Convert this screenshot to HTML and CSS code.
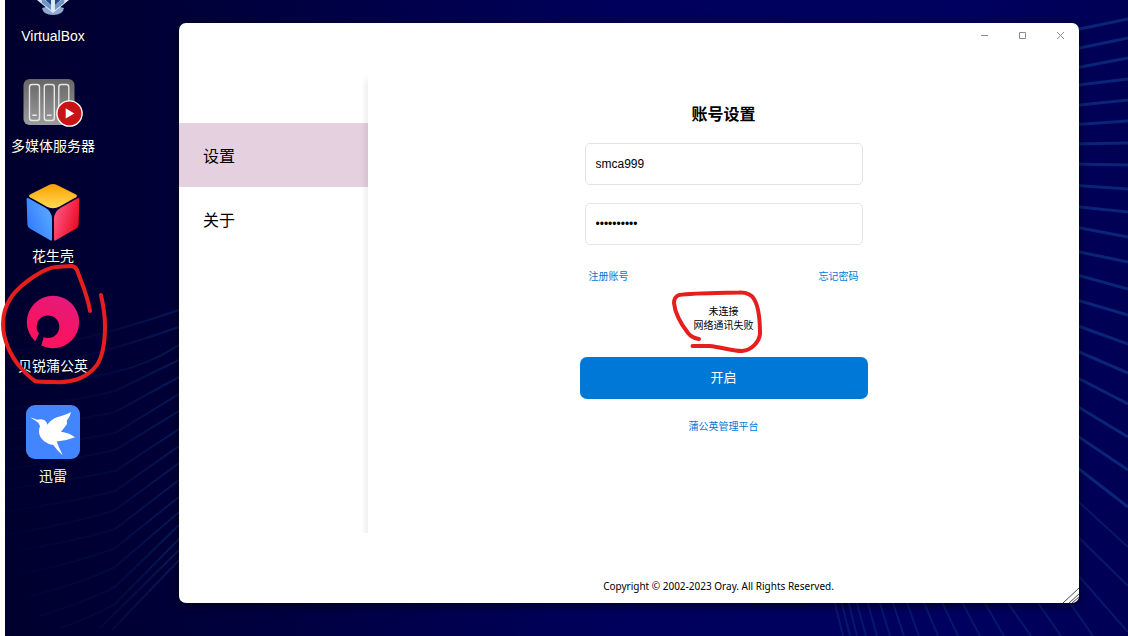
FILE: index.html
```
<!DOCTYPE html>
<html lang="zh-CN">
<head>
  <meta charset="UTF-8">
  <meta name="viewport" content="width=device-width, initial-scale=1.0">
  <title>贝锐蒲公英</title>
  <link rel="stylesheet" href="styles.css">
</head>
<body>
  <div class="desktop">
    <!-- Wallpaper waves -->
    <svg class="wallpaper" viewBox="5 0 1123 636" preserveAspectRatio="none" aria-hidden="true">
      <defs>
        <linearGradient id="waveFade" gradientUnits="userSpaceOnUse" x1="5" y1="0" x2="179" y2="0">
          <stop offset="0" stop-color="#04104a" stop-opacity="0.1"/>
          <stop offset="0.6" stop-color="#04104a" stop-opacity="0.5"/>
          <stop offset="1" stop-color="#061a58"/>
        </linearGradient>
      </defs>
      <g class="waves-right">
        <path d="M1070 31L1128 19M1070 50L1128 38M1070 69L1128 58M1070 86L1128 79M1070 106L1128 100M1070 125L1128 121M1070 144L1128 143M1070 164L1128 165M1070 185L1128 189M1070 206L1128 212M1070 226L1128 237M1070 250L1128 262M1070 273L1128 289"/>
        <path d="M1070 298L1128 315M1070 323L1128 344M1070 348L1128 373M1070 374L1128 404M1070 402L1128 437M1070 431L1128 470M1070 462L1128 507"/>
      </g>
      <g class="waves-low">
        <path d="M1070 494L1128 547M1070 529L1128 586M1070 566L1128 632M1068 600L1093 636M1036 600L1061 636M1006 600L1031 636M983 600L1004 636M961 600L980 636M941 600L958 636M923 600L938 636M906 600L919 636M892 600L904 636M879 600L890 636M867 600L877 636M856 600L866 636M848 600L857 636M841 600L850 636M834 600L843 636"/>
      </g>
      <g class="waves-left">
        <path d="M5 352Q80 344 179 310M5 372Q80 362 179 327M5 391Q80 380 115 372T179 345M5 410Q80 400 115 391L179 360M5 430Q80 420 115 412L179 377M5 450Q80 440 115 433L179 394M5 470Q80 458 115 450L179 411M5 490Q80 478 115 471L179 429M5 512Q80 500 115 491L179 446M5 535Q80 522 115 510L179 463M20 550Q80 540 115 529L179 480M20 574Q80 562 115 548L179 497M30 596Q80 584 115 567L179 512M40 616Q90 600 115 587L179 525M60 628Q90 618 115 604L179 539M100 628L179 550M112 630L179 560"/>
      </g>
    </svg>

    <nav class="shortcuts">
      <a href="#" class="shortcut">
        <svg class="shortcut-icon" viewBox="0 0 58 58" aria-hidden="true">
          <path d="M18 45Q29 41 40 45Q39 52 29 52Q19 52 18 45Z" fill="#8fa9d2"/>
          <path d="M5 18L29 7L53 18L45 37L29 50L13 37Z" fill="#dbe7f5"/>
          <path d="M17 34L27 42V47L18 40ZM41 34L31 42V47L40 40Z" fill="#6f93c4"/>
          <path d="M17 33L27 37V42ZM41 33L31 37V42Z" fill="#1f4a82"/>
        </svg>
        <span>VirtualBox</span>
      </a>
      <a href="#" class="shortcut">
        <svg class="shortcut-icon" viewBox="0 0 58 58" aria-hidden="true">
          <defs>
            <linearGradient id="metal" x1="0" y1="0" x2="0" y2="1">
              <stop offset="0" stop-color="#666"/>
              <stop offset="1" stop-color="#9c9c9c"/>
            </linearGradient>
          </defs>
          <rect x="-0.5" y="6" width="51" height="46" rx="6" fill="url(#metal)"/>
          <g fill="none" stroke="#e6e6e6" stroke-width="1.4">
            <rect x="5.5" y="11.5" width="10" height="36" rx="2.5"/>
            <rect x="20.3" y="11.5" width="10" height="36" rx="2.5"/>
            <rect x="34.8" y="11.5" width="10" height="36" rx="2.5"/>
            <path d="M8.3 42.3H12.7M23 42.3H27.5"/>
          </g>
          <circle cx="45.5" cy="40.5" r="12.6" fill="#c81414" stroke="#fff" stroke-width="1.4"/>
          <path d="M41.7 35.2V45.6L50.3 40.4Z" fill="#fff"/>
        </svg>
        <span>多媒体服务器</span>
      </a>
      <a href="#" class="shortcut">
        <svg class="shortcut-icon" viewBox="0 0 58 58" aria-hidden="true">
          <defs>
            <linearGradient id="cubeTop" x1="0" y1="0" x2="0" y2="1">
              <stop offset="0" stop-color="#ff9f00"/>
              <stop offset="1" stop-color="#ffda55"/>
            </linearGradient>
            <linearGradient id="cubeLeft" x1="1" y1="0" x2="0" y2="0.7">
              <stop offset="0" stop-color="#5fb4ff"/>
              <stop offset="1" stop-color="#3378ff"/>
            </linearGradient>
            <linearGradient id="cubeRight" x1="0" y1="0.2" x2="1" y2="0.7">
              <stop offset="0" stop-color="#ff5c8c"/>
              <stop offset="1" stop-color="#e8071c"/>
            </linearGradient>
          </defs>
          <path d="M26 1.6Q29 0.2 32 1.6L52 11.4Q54 12.8 52 14.2L36 23.3Q29 27 22 23.3L6 14.2Q4 12.8 6 11.4Z" fill="url(#cubeTop)"/>
          <path d="M2.6 16Q2.8 14.4 4.5 15.2L21 24.5Q28 28.6 28 36V56.5Q27.8 58.3 26.2 57.3L5.8 45.5Q3.6 44 3.4 41.5Z" fill="url(#cubeLeft)"/>
          <path d="M55.4 16Q55.2 14.4 53.5 15.2L37 24.5Q30 28.6 30 36V56.5Q30.2 58.3 31.8 57.3L52.2 45.5Q54.4 44 54.6 41.5Z" fill="url(#cubeRight)"/>
        </svg>
        <span>花生壳</span>
      </a>
      <a href="#" class="shortcut">
        <svg class="shortcut-icon" viewBox="0 0 58 58" aria-hidden="true">
          <defs>
            <linearGradient id="pink" x1="0.7" y1="0" x2="0.4" y2="0.7">
              <stop offset="0" stop-color="#e31b7c"/>
              <stop offset="1" stop-color="#fb1260"/>
            </linearGradient>
            <mask id="ring">
              <rect width="58" height="58" fill="#fff"/>
              <circle cx="24" cy="33.7" r="11.3" fill="#000"/>
              <path d="M15 40.5L20 43L16.5 55L9 53Z" fill="#000"/>
            </mask>
          </defs>
          <circle cx="29" cy="29" r="26.2" fill="url(#pink)" mask="url(#ring)"/>
        </svg>
        <span>贝锐蒲公英</span>
        <svg class="mark mark-app" viewBox="0 260 110 130" aria-hidden="true">
          <path d="M90 311C88 297 81 281 77 270Q75 266 71 266L56 267C44 268 22 283 12 296C5 306 3 316 3 324C3 340 11 357 21 368Q29 377 35 381Q38 382 54 382C72 383 87 378 97 365C104 354 105 340 105 326Q105 313 101 295"/>
        </svg>
      </a>
      <a href="#" class="shortcut">
        <svg class="shortcut-icon" viewBox="0 0 58 58" aria-hidden="true">
          <rect x="2" y="2" width="54" height="54" rx="9" fill="#4285ff"/>
          <path d="M6 14.3L13.3 16.7Q17.5 15.3 21 17.5Q23 19.5 23.3 21.7Q27 16.500 33 14.3Q42 12 47 9Q46.5 13.5 42.8 17.7L43 21Q40.5 24.5 37 28.7Q45 29.5 51 34.3Q42 38 32.7 38.5Q35 45 38.7 52.3Q34 48.5 29.3 42Q24.5 41.5 20.5 38.5Q15 34 15 29Q15 25.5 16 23Q15.5 20 12 18Z" fill="#fff"/>
        </svg>
        <span>迅雷</span>
      </a>
    </nav>

    <main class="window">
      <header class="titlebar">
        <button class="titlebar-btn" aria-label="最小化">
          <svg viewBox="0 0 8 8"><path d="M1 4.5H8"/></svg>
        </button>
        <button class="titlebar-btn" aria-label="最大化">
          <svg viewBox="0 0 8 8"><path d="M1.5 1.5H7.5V7.5H1.5Z"/></svg>
        </button>
        <button class="titlebar-btn" aria-label="关闭">
          <svg viewBox="0 0 8 8"><path d="M1 1L8 8M8 1L1 8"/></svg>
        </button>
      </header>
      <div class="window-body">
        <nav class="sidebar">
          <a href="#" class="active">设置</a>
          <a href="#">关于</a>
        </nav>
        <section class="content">
          <h1>账号设置</h1>
          <form class="account-form">
            <input class="field" type="text" value="smca999" aria-label="账号">
            <input class="field" type="password" value="abcdefghij" aria-label="密码">
            <div class="form-links">
              <a href="#">注册账号</a>
              <a href="#">忘记密码</a>
            </div>
            <div class="status">
              <div>未连接</div>
              <div>网络通讯失败</div>
              <svg class="mark mark-status" viewBox="668 288 98 68" aria-hidden="true">
                <path d="M699 339Q692 338 688 333C681 324 675 313 674 303Q674 297 679 295C692 293 716 293 739 292.5Q750 292 754 299C759 307 760 319 760 334C759 342 752 350 742 351C732 351 722 347 709 346H692.5"/>
              </svg>
            </div>
            <button class="start-btn" type="button">开启</button>
            <a href="#" class="platform-link">蒲公英管理平台</a>
          </form>
        </section>
      </div>
      <footer class="footer">Copyright © 2002-2023 Oray. All Rights Reserved.</footer>
      <svg class="grip" viewBox="0 0 16 16" aria-hidden="true"><path d="M0 16L16 1M6 16L16 7M9 16L16 10"/></svg>
    </main>
  </div>
</body>
</html>
```

FILE: styles.css
```
:root {
  --blue: #0078d7;
  --red: #e61e1e;
  --cjk: "Liberation Sans", "Noto Sans CJK SC", sans-serif;
}
* {
  box-sizing: border-box;
}
body {
  margin: 0;
  padding-left: 5px;
  background: #fff;
  font-family: var(--cjk);
  color: #000;
  overflow: hidden;
}
a {
  color: var(--blue);
  text-decoration: none;
}
.desktop {
  position: relative;
  display: flex;
  min-height: 100vh;
  background: linear-gradient(90deg, #00002e 0%, #000038 15%, #00005c 55%, #000060 85%, #000054 100%);
}

/* Wallpaper */
.wallpaper {
  position: absolute;
  inset: 0;
  width: 100%;
  height: 100%;
  fill: none;
}
.waves-right {
  stroke: #0a2478;
  stroke-width: 3;
}
.waves-low {
  stroke: #06186a;
  stroke-width: 2;
}
.waves-left {
  stroke: url(#waveFade);
  stroke-width: 2;
}

/* Desktop shortcuts */
.shortcuts {
  position: relative;
  display: flex;
  flex-direction: column;
  gap: 27px;
  width: 96px;
  margin-top: -37px;
}
.shortcut {
  position: relative;
  display: flex;
  flex-direction: column;
  align-items: center;
  gap: 5px;
  color: #fff;
  font-size: 14px;
  line-height: 20px;
  white-space: nowrap;
  text-shadow: 0 1px 2px #000;
}
.shortcut-icon {
  width: 58px;
  height: 58px;
  overflow: visible;
}

/* Red pen marks */
.mark {
  position: absolute;
  fill: none;
  stroke: var(--red);
  stroke-width: 4;
  stroke-linecap: round;
  stroke-linejoin: round;
  pointer-events: none;
}
.mark-app {
  top: -33px;
  left: -5px;
  width: 110px;
  height: 130px;
}
.mark-status {
  top: -17px;
  left: calc(50% - 56px);
  width: 98px;
  height: 68px;
}

/* Window */
.window {
  position: relative;
  flex: 1;
  display: flex;
  flex-direction: column;
  margin: 23px 49px 33px 78px;
  background: #fff;
  border-radius: 7px;
  box-shadow: 0 2px 10px rgba(0, 0, 0, 0.6);
  overflow: hidden;
}
.titlebar {
  display: flex;
  justify-content: flex-end;
  height: 50px;
}
.titlebar-btn {
  display: flex;
  align-items: center;
  justify-content: center;
  width: 38px;
  height: 24px;
  padding: 0;
  border: none;
  background: none;
}
.titlebar-btn svg {
  width: 8px;
  height: 8px;
  fill: none;
  stroke: #8c8c8c;
  overflow: visible;
}
.window-body {
  flex: 1;
  display: flex;
}
.sidebar {
  position: relative;
  width: 189px;
  padding-top: 50px;
}
.sidebar::after {
  content: '';
  position: absolute;
  inset: 0 0 0 auto;
  width: 7px;
  background: linear-gradient(90deg, transparent, rgba(0, 0, 0, 0.06));
  -webkit-mask-image: linear-gradient(transparent, #000 14px);
  mask-image: linear-gradient(transparent, #000 14px);
}
.sidebar a {
  display: block;
  height: 64px;
  padding: 4px 24px 0;
  font-size: 16px;
  line-height: 60px;
  color: #000;
}
.sidebar a.active {
  background: #e4d0df;
}
.content {
  flex: 1;
  display: flex;
  flex-direction: column;
  align-items: center;
  padding-top: 30px;
}
h1 {
  margin: 0 0 16px;
  font-size: 16px;
  font-weight: 700;
  line-height: 24px;
}
.account-form {
  display: flex;
  flex-direction: column;
  width: 288px;
}
.field {
  height: 42px;
  margin: 0 5px 18px;
  padding: 0 10px;
  border: 1px solid #e3e3e3;
  border-radius: 5px;
  font-family: var(--cjk);
  font-size: 12px;
  color: #000;
}
.form-links {
  display: flex;
  justify-content: space-between;
  margin: 6px 9px 20px;
  font-size: 10px;
  line-height: 16px;
}
.status {
  position: relative;
  margin-bottom: 24px;
  font-size: 10px;
  line-height: 14px;
  text-align: center;
}
.start-btn {
  height: 42px;
  padding: 0 0 4px;
  border: none;
  border-radius: 7px;
  background: var(--blue);
  color: #fff;
  font-family: var(--cjk);
  font-size: 13px;
}
.platform-link {
  margin-top: 20px;
  font-size: 10px;
  line-height: 16px;
  text-align: center;
}
.footer {
  height: 70px;
  padding: 45px 10px 0 189px;
  font-family: "Noto Sans", "Open Sans", sans-serif;
  font-size: 10px;
  line-height: 16px;
  text-align: center;
}
.grip {
  position: absolute;
  right: 0;
  bottom: 0;
  width: 16px;
  height: 16px;
  stroke: #4a4a4a;
}
```
